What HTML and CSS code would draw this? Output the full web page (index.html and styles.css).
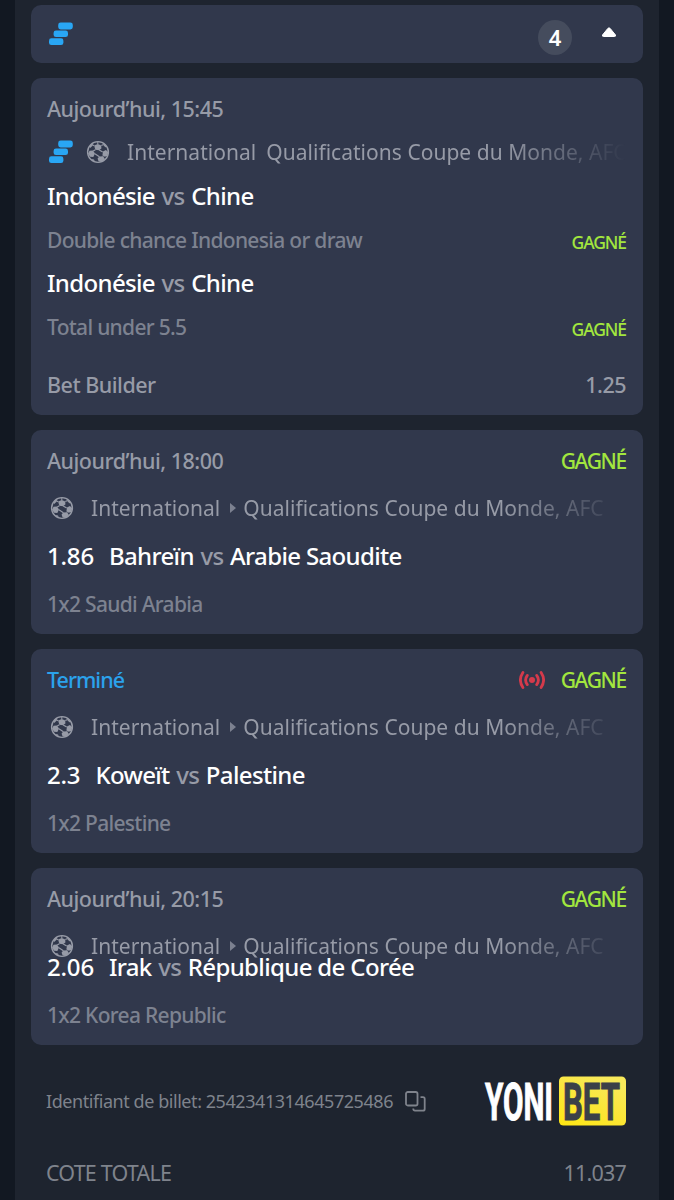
FILE: index.html
```
<!DOCTYPE html>
<html lang="fr">
<head>
    <meta charset="UTF-8">
    <meta name="viewport" content="width=device-width, initial-scale=1.0">
    <title>Yonibet - Billet</title>
    <link rel="stylesheet" href="styles.css">
</head>
<body>
    <!-- Shared icons -->
    <svg class="sprite" xmlns="http://www.w3.org/2000/svg">
        <symbol id="icon-builder" viewBox="0 0 24 24">
            <rect x="9.2" y="0.6" width="14.6" height="6.8" rx="2.4" fill="#29a6f4"/>
            <rect x="4.6" y="8.6" width="14.4" height="6.5" rx="2.4" fill="#29a6f4"/>
            <rect x="0" y="16.3" width="14.4" height="6.8" rx="2.4" fill="#29a6f4"/>
        </symbol>
        <symbol id="icon-ball" viewBox="0 0 24 24">
            <circle cx="12" cy="12" r="10.4" fill="none" stroke="currentColor" stroke-width="1.4"/>
            <g fill="currentColor">
                <path d="M8.2 5.6 11.8 4l3.400 1.500.2 3-2.400 1.700-3.700-.5z"/>
                <path d="M3.600 10.800 7 10.600l2 3-1.700 3.300-3.400-.2-1.800-3.200z"/>
                <path d="M17 11.600l2.900-1.500 2.300 2-.8 4-2.800.6-2.100-2z"/>
                <path d="M13.300 16.600l3.800-.3 1.800 2.600-3.400 3-3-.7-.9-2.600z"/>
                <path d="M4 5.300 7.200 2.600l-.7 3.200-2.600 2.400zM17.500 2.900l2.800 3.200-.8 1.500-2-2.400zM5 19.100l3 .4.900 2.300z"/>
            </g>
            <path d="M9.400 9.700 7.200 11M13.200 10l3.500 2M8.900 13.700l4.500 3M17 16.300l.5-2M11.800 4V1.700M8.200 5.700 6.200 4.700M15.300 5.500l2.300-1" fill="none" stroke="currentColor" stroke-width="1.1"/>
        </symbol>
    </svg>

    <main class="ticket">
        <header class="card ticket-header">
            <svg class="builder"><use href="#icon-builder"/></svg>
            <span class="count">4</span>
            <svg class="toggle" viewBox="0 0 16 12"><path d="M1.500 9 6.800 2.500q1.200-1.300 2.400 0L14.500 9q.5 1.500-1.200 1.500H2.700Q1 10.500 1.500 9z" fill="#fff" stroke="#fff" stroke-linejoin="round"/></svg>
        </header>

        <section class="card builder-card">
            <div class="row date"><span>Aujourd’hui, 15:45</span></div>
            <div class="row league">
                <svg class="builder"><use href="#icon-builder"/></svg>
                <svg class="ball"><use href="#icon-ball"/></svg>
                <div class="path"><span>International</span><i class="dot"></i><span>Qualifications Coupe du Monde, AFC</span></div>
            </div>
            <div class="row match">Indonésie&nbsp;<em>vs</em>&nbsp;Chine</div>
            <div class="row pick"><span>Double chance Indonesia or draw</span><b class="won">GAGNÉ</b></div>
            <div class="row match">Indonésie&nbsp;<em>vs</em>&nbsp;Chine</div>
            <div class="row pick"><span>Total under 5.5</span><b class="won">GAGNÉ</b></div>
            <div class="row total"><span>Bet Builder</span><span>1.25</span></div>
        </section>

        <section class="card">
            <div class="row date"><span>Aujourd’hui, 18:00</span><b class="won">GAGNÉ</b></div>
            <div class="row league">
                <svg class="ball"><use href="#icon-ball"/></svg>
                <div class="path"><span>International</span><i class="arrow"></i><span>Qualifications Coupe du Monde, AFC</span></div>
            </div>
            <div class="row match"><span class="odds">1.86</span>Bahreïn&nbsp;<em>vs</em>&nbsp;Arabie Saoudite</div>
            <div class="row pick"><span>1x2 Saudi Arabia</span></div>
        </section>

        <section class="card">
            <div class="row date">
                <span class="ended">Terminé</span>
                <svg class="live" viewBox="0 0 26 20" fill="none" stroke="#d53a4b" stroke-width="2.8" stroke-linecap="round">
                    <circle cx="13" cy="10" r="3" fill="#d53a4b" stroke="none"/>
                    <path d="M8.300 5.400q-3.400 4.600 0 9.200M17.700 5.400q3.400 4.600 0 9.200M3.900 2.400q-5 7.600 0 15.200M22.100 2.400q5 7.600 0 15.200"/>
                </svg>
                <b class="won">GAGNÉ</b>
            </div>
            <div class="row league">
                <svg class="ball"><use href="#icon-ball"/></svg>
                <div class="path"><span>International</span><i class="arrow"></i><span>Qualifications Coupe du Monde, AFC</span></div>
            </div>
            <div class="row match"><span class="odds">2.3</span>Koweït&nbsp;<em>vs</em>&nbsp;Palestine</div>
            <div class="row pick"><span>1x2 Palestine</span></div>
        </section>

        <section class="card collapsed">
            <div class="row date"><span>Aujourd’hui, 20:15</span><b class="won">GAGNÉ</b></div>
            <div class="row league">
                <svg class="ball"><use href="#icon-ball"/></svg>
                <div class="path"><span>International</span><i class="arrow"></i><span>Qualifications Coupe du Monde, AFC</span></div>
            </div>
            <div class="row match"><span class="odds">2.06</span>Irak&nbsp;<em>vs</em>&nbsp;République de Corée</div>
            <div class="row pick"><span>1x2 Korea Republic</span></div>
        </section>

        <footer class="ticket-footer">
            <div class="ticket-id">
                <span>Identifiant de billet: 2542341314645725486</span>
                <svg class="copy" viewBox="0 0 21 21" fill="none" stroke="#7f838c" stroke-width="1.8">
                    <rect x="1" y="1" width="11.500" height="13.500" rx="1.800"/>
                    <path d="M15.500 6.200H18q1.700 0 1.700 1.700v10q0 1.700-1.700 1.700h-8q-1.700 0-1.700-1.700v-.5"/>
                </svg>
                <svg class="logo" viewBox="0 0 142 50">
                    <defs>
                        <linearGradient id="yellow" x1="0" y1="1" x2="0.600" y2="0">
                            <stop offset="0" stop-color="#ffe712"/>
                            <stop offset="0.500" stop-color="#fbe635"/>
                            <stop offset="1" stop-color="#f8e95a"/>
                        </linearGradient>
                    </defs>
                    <rect x="75" y="0.500" width="67" height="49" rx="4.500" fill="url(#yellow)"/>
                    <text x="1" y="43.600" textLength="68" lengthAdjust="spacingAndGlyphs" fill="#fff" stroke="#fff">YONI</text>
                    <text x="79" y="43.600" textLength="57" lengthAdjust="spacingAndGlyphs" fill="#3b4048" stroke="#3b4048">BET</text>
                </svg>
            </div>
            <div class="sum"><span>COTE TOTALE</span><span>11.037</span></div>
        </footer>
    </main>
</body>
</html>
```
FILE: styles.css
```
* {
    margin: 0;
    padding: 0;
    box-sizing: border-box;
}

body {
    height: 1200px;
    overflow: hidden;
    background: #121822;
    font-family: 'Noto Sans', 'Open Sans', sans-serif;
    color: #979ba7;
}

.sprite {
    display: none;
}

.ticket {
    display: flex;
    flex-direction: column;
    gap: 15px;
    height: 1200px;
    margin: 0 15px;
    padding: 5px 16px 0;
    background: #1e242f;
}

.card {
    height: 204px;
    padding: 7px 17px 0 16px;
    border-radius: 10px;
    background: #31384c;
    flex-shrink: 0;
}

.ticket-header {
    display: flex;
    align-items: center;
    height: 58px;
    padding: 0 26px 0 18px;
}

.builder {
    width: 24px;
    height: 24px;
    flex-shrink: 0;
}

.count {
    width: 34px;
    height: 35px;
    margin: 6px 29px 0 auto;
    border-radius: 50%;
    background: #454c5d;
    color: #fff;
    font-size: 22px;
    font-weight: 600;
    line-height: 34px;
    text-align: center;
}

.toggle {
    width: 16px;
    height: 12px;
    margin-bottom: 4px;
}

.row {
    display: flex;
    align-items: center;
    height: 47.8px;
    white-space: nowrap;
}

.date,
.total {
    font-size: 21.5px;
    font-weight: 500;
    letter-spacing: -0.5px;
}

.won {
    margin-left: auto;
    color: #a2e63e;
    font-size: 21px;
    font-weight: 500;
    letter-spacing: -1.3px;
}

.pick .won {
    padding-top: 4px;
    font-size: 17.5px;
    letter-spacing: -1.1px;
}

.ended {
    color: #2ba2ec;
    letter-spacing: -1px;
}

.live {
    width: 26px;
    height: 20px;
    margin-left: auto;
}

.live + .won {
    margin-left: 16px;
}

.league {
    padding-bottom: 1px;
    font-size: 21px;
    letter-spacing: 0.03px;
}

.ball {
    width: 24px;
    height: 24px;
    margin-left: 3px;
    flex-shrink: 0;
}

.path {
    display: flex;
    align-items: center;
    width: 513px;
    margin-left: 17px;
    -webkit-mask-image: linear-gradient(to right, #000 80%, transparent 104%);
    mask-image: linear-gradient(to right, #000 80%, transparent 104%);
}

.arrow {
    margin: 0 7px 0 10px;
    border: 5px solid transparent;
    border-left: 6px solid #7c8190;
    border-right: none;
}

.dot {
    width: 1px;
    height: 2px;
    margin: 0 5px;
    background: #596071;
}

.match {
    padding-bottom: 2px;
    color: #fff;
    font-size: 24px;
    font-weight: 500;
    letter-spacing: -0.65px;
}

.match em {
    margin: 0 1px;
    color: #979ba7;
    font-style: normal;
}

.odds {
    margin-right: 15px;
    letter-spacing: -0.2px;
}

.pick {
    color: #7d8290;
    font-size: 21px;
    font-weight: 500;
    letter-spacing: -0.7px;
}

.builder-card {
    height: 337px;
    padding-top: 9px;
}

.builder-card .row {
    height: 43.7px;
}

.builder-card .builder {
    margin-left: 2px;
}

.builder-card .ball {
    margin-left: 13px;
}

.builder-card .path {
    width: 498px;
    margin-left: 17px;
    -webkit-mask-image: linear-gradient(to right, #000 75%, transparent);
    mask-image: linear-gradient(to right, #000 75%, transparent);
}

.total {
    justify-content: space-between;
}

.builder-card .total {
    margin-top: 14px;
}

.collapsed {
    height: 177px;
}

.collapsed .match {
    margin-top: -27px;
}

.ticket-footer {
    padding: 16px 17px 0 15px;
    color: #7f838c;
}

.ticket-id {
    display: flex;
    align-items: center;
    height: 50px;
    font-size: 18px;
    letter-spacing: -0.44px;
    white-space: nowrap;
}

.copy {
    width: 21px;
    height: 21px;
    margin-left: 12px;
}

.logo {
    width: 142px;
    height: 50px;
    margin-left: auto;
}

.logo text {
    font-family: Roboto, sans-serif;
    font-size: 52.5px;
    font-weight: 700;
    letter-spacing: 0;
    stroke-width: 1px;
}

.sum {
    display: flex;
    justify-content: space-between;
    align-items: center;
    height: 44px;
    margin-top: 24px;
    font-size: 21.5px;
    letter-spacing: -0.8px;
}
```
